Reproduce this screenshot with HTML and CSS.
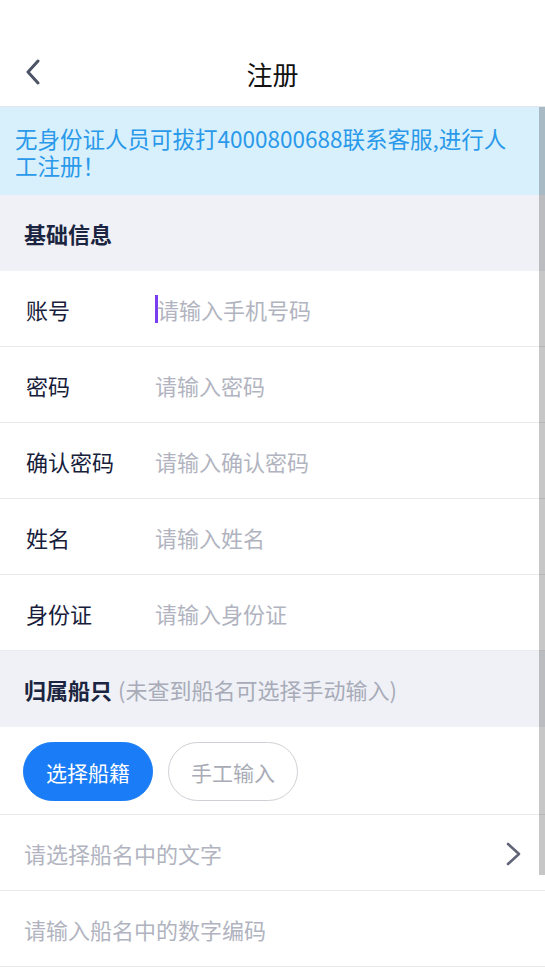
FILE: index.html
```html
<!DOCTYPE html>
<html lang="zh-CN">
<head>
    <meta charset="UTF-8">
    <meta name="viewport" content="width=device-width, initial-scale=1.0">
    <title>注册</title>
    <link rel="stylesheet" href="styles.css">
</head>
<body>
    <div class="page">
        <header class="nav">
            <span class="nav-back">
                <svg width="18" height="26" viewBox="0 0 18 26">
                    <polyline points="14,2 4,13 14,24" fill="none" stroke="#4c5466" stroke-width="3" stroke-linecap="round" stroke-linejoin="round"/>
                </svg>
            </span>
            <h1 class="nav-title">注册</h1>
        </header>

        <div class="notice">无身份证人员可拔打4000800688联系客服,进行人工注册！</div>

        <div class="section-head">基础信息</div>

        <div class="field">
            <span class="field-label">账号</span>
            <span class="field-input"><span class="caret"></span>请输入手机号码</span>
        </div>
        <div class="field">
            <span class="field-label">密码</span>
            <span class="field-input">请输入密码</span>
        </div>
        <div class="field">
            <span class="field-label">确认密码</span>
            <span class="field-input">请输入确认密码</span>
        </div>
        <div class="field">
            <span class="field-label">姓名</span>
            <span class="field-input">请输入姓名</span>
        </div>
        <div class="field">
            <span class="field-label">身份证</span>
            <span class="field-input">请输入身份证</span>
        </div>

        <div class="section-head">归属船只 <span class="section-tip">(未查到船名可选择手动输入)</span></div>

        <div class="tabs">
            <span class="tab tab-active">选择船籍</span>
            <span class="tab">手工输入</span>
        </div>

        <div class="field field-plain">
            <span class="field-input">请选择船名中的文字</span>
            <svg class="arrow" width="18" height="24" viewBox="0 0 18 24">
                <polyline points="3,2 14,12 3,22" fill="none" stroke="#5f6477" stroke-width="2.6" stroke-linecap="round" stroke-linejoin="round"/>
            </svg>
        </div>
        <div class="field field-plain">
            <span class="field-input">请输入船名中的数字编码</span>
        </div>

        <div class="scrollbar"></div>
    </div>
</body>
</html>
```

FILE: styles.css
```css
body {
    margin: 0;
    font-family: "Noto Sans CJK SC", "Noto Sans", sans-serif;
    background-color: #fff;
}

.page {
    position: relative;
    width: 545px;
    min-height: 970px;
}

.nav {
    height: 66px;
    padding-top: 40px;
    display: flex;
    align-items: center;
    justify-content: center;
    position: relative;
    border-bottom: 1px solid #e4e6ea;
}

.nav-back {
    position: absolute;
    left: 24px;
    top: 59px;
}

.nav-title {
    margin: 0;
    font-size: 26px;
    font-weight: normal;
    color: #111;
}

.notice {
    background-color: #d8f0fc;
    color: #2a99ea;
    font-size: 22.5px;
    line-height: 27px;
    padding: 18px 28px 16px 15px;
}

.section-head {
    height: 76px;
    display: flex;
    align-items: center;
    padding-left: 24px;
    background-color: #eff1f6;
    color: #1b2440;
    font-size: 22px;
    font-weight: bold;
}

.section-tip {
    font-weight: normal;
    color: #a8abb8;
    margin-left: 6px;
}

.field {
    height: 75px;
    display: flex;
    align-items: center;
    padding-left: 26px;
    border-bottom: 1px solid #e9eaee;
    font-size: 22px;
}

.field-label {
    width: 129px;
    color: #17203a;
}

.field-input {
    color: #b1b4c0;
    display: flex;
    align-items: center;
}

.caret {
    width: 3px;
    height: 28px;
    background-color: #7a3ef0;
    margin-right: -1px;
}

.field-plain {
    padding-left: 24px;
    padding-right: 22px;
    justify-content: space-between;
}

.arrow {
    margin-top: 2px;
}

.tabs {
    display: flex;
    align-items: flex-start;
    gap: 15px;
    padding: 15px 0 0 23px;
    box-sizing: border-box;
    height: 88px;
    border-bottom: 1px solid #e9eaee;
}

.tab {
    width: 130px;
    height: 59px;
    box-sizing: border-box;
    border-radius: 30px;
    border: 1px solid #cfd0d6;
    color: #a9acb6;
    font-size: 21px;
    display: flex;
    align-items: center;
    justify-content: center;
}

.tab-active {
    background-color: #1a7cf6;
    border-color: #1a7cf6;
    color: #fff;
}

.scrollbar {
    position: absolute;
    right: 0;
    top: 107px;
    width: 6px;
    height: 768px;
    background-color: rgba(0, 0, 0, 0.22);
}
```
